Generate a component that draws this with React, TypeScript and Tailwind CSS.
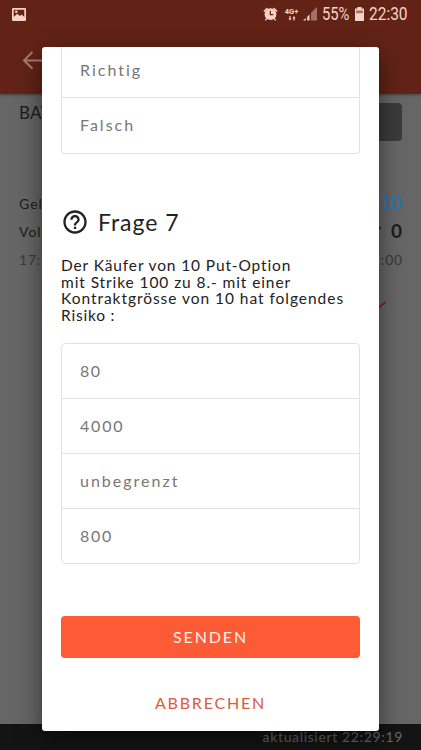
import { MdHelpOutline } from "react-icons/md";

const previousAnswers = ["Richtig", "Falsch"];

const answers = [
  { label: "80", spacing: "tracking-[1.5px]" },
  { label: "4000", spacing: "tracking-[1.8px]" },
  { label: "unbegrenzt", spacing: "tracking-[2px]" },
  { label: "800", spacing: "tracking-[1.7px]" },
];

const questionLines = [
  { text: "Der Käufer von 10 Put-Option", spacing: "tracking-[0.87px]" },
  { text: "mit Strike 100 zu 8.- mit einer", spacing: "tracking-[0.91px]" },
  { text: "Kontraktgrösse von 10 hat folgendes", spacing: "tracking-[0.96px]" },
  { text: "Risiko :", spacing: "tracking-[0.8px]" },
];

function StatusBar() {
  return (
    <div className="flex h-7 items-center pl-3 pr-[13px] font-['Roboto',sans-serif] text-[#f5d3c9]">
      <svg className="h-[13px] w-[14px]" viewBox="0 0 14 13" fill="none">
        <rect width="14" height="13" rx="1.3" fill="currentColor" />
        <path d="M1.7 1.7h10.6v7.2L9.6 6.4 8 8 5.2 5.7 1.7 9z" fill="#622316" />
        <circle cx="4.3" cy="3.7" r="1.3" fill="currentColor" />
      </svg>
      <div className="ml-auto flex items-center">
        <svg className="h-[14px] w-[15px]" viewBox="0 0 15 14" fill="currentColor">
          <circle cx="7.5" cy="7.2" r="5.9" />
          <path d="M.3 3.9 3.9.4l1.1 1.2-3.6 3.5zM14.7 3.9 11.1.4 10 1.6l3.6 3.5zM3.5 11l-1.7 2 .9.8 2-2zM11.5 11l1.7 2-.9.8-2-2z" />
          <path d="M7.3 3.8v3.8h3" fill="none" stroke="#622316" strokeWidth="1.2" />
        </svg>
        <div className="ml-[6px] flex w-[15px] flex-col items-center">
          <span className="text-[7.5px] font-bold leading-[8px]">4G+</span>
          <svg className="h-[5px] w-[8px]" viewBox="0 0 8 5" fill="currentColor">
            <path d="M1.4 0h1.2v2.4h1L2 4.6.4 2.4h1zM5.4 4.6h1.2V2.2h1L6 0 4.4 2.2h1z" />
          </svg>
        </div>
        <svg className="ml-[4px] h-[14px] w-[14px]" viewBox="0 0 14 14" fill="currentColor">
          <path d="M0 13.5 2.8 11v2.5zM4.2 9.8 6.5 7.4v6.1H4.2z" />
          <path d="M8 5.8 14 0v13.5H8z" opacity=".45" />
        </svg>
        <span className="ml-[5px] w-[28px] whitespace-nowrap text-[18px] leading-7">
          <span className="inline-block origin-left scale-x-[0.82]">55%</span>
        </span>
        <svg className="ml-[5px] h-[14px] w-[9px]" viewBox="0 0 9 14" fill="currentColor">
          <path d="M2.4 0h4.2v1.5H9V14H0V1.5h2.4z" />
          <path d="M1.1 3.4h6.8v2.8H1.1z" fill="#622316" opacity=".55" />
        </svg>
        <span className="ml-[5px] w-[39px] whitespace-nowrap text-[18px] leading-7">
          <span className="inline-block origin-left scale-x-[0.86]">22:30</span>
        </span>
      </div>
    </div>
  );
}

function QuoteScreen() {
  return (
    <div className="flex h-[750px] flex-col bg-[#666]">
      <header className="h-[94px] bg-[#622316] shadow-[0_1px_3px_rgba(0,0,0,0.35)]">
        <StatusBar />
        <svg className="ml-[22px] mt-[22px] h-5 w-[26px]" viewBox="0 0 26 20" fill="none">
          <path d="M26 10.4H2M10.5 2 2 10.4l8.5 8.4" stroke="#a87c72" strokeWidth="2" />
        </svg>
      </header>
      <main className="flex-1 px-[19px] text-[#1c1c1c]">
        <div className="mt-[9px] flex h-[38px] justify-between">
          <span className="text-[17px] leading-[20px] tracking-[0.3px]">BATN</span>
          <span className="w-20 rounded bg-[#3b3b3b]" />
        </div>
        <div className="mt-[48px] flex h-7 items-center justify-between">
          <span className="text-[14px] tracking-[1px]">Geld</span>
          <span className="text-[19px] font-bold text-[#2877ad]">10</span>
        </div>
        <div className="flex h-7 items-center justify-between">
          <span className="text-[14px] tracking-[1px]">Vol.</span>
          <span className="flex items-center gap-[9px]">
            <span className="text-[12px] font-bold">*</span>
            <span className="text-[19px] font-bold">0</span>
          </span>
        </div>
        <div className="flex h-7 items-center justify-between text-[14px] tracking-[0.8px] text-[#3a3a3a]">
          <span>17:3</span>
          <span className="-mr-px">:00</span>
        </div>
        <svg className="ml-auto mr-[16px] mt-[28px] h-[9px] w-[16px]" viewBox="0 0 16 9" fill="none">
          <path d="m0 5 7 3 8.500-7" stroke="#8c231b" strokeWidth="2" />
        </svg>
      </main>
      <footer className="h-[26px] bg-[#141414] pr-[18px] text-right text-[14px] leading-[25px] tracking-[0.65px] text-[#686868]">
        aktualisiert 22:29:19
      </footer>
    </div>
  );
}

export default function App() {
  return (
    <div className="relative h-[750px] w-[421px] overflow-hidden font-['Lato',sans-serif]">
      <QuoteScreen />
      <div className="absolute left-[42px] top-[47px] flex h-[684px] w-[337px] flex-col overflow-hidden rounded-[3px] bg-white px-[19px] shadow-[0_8px_24px_rgba(0,0,0,0.5)]">
        <ul className="h-[107px] rounded-b border border-t-0 border-[#e2e2e2] text-base text-[#777]">
          {previousAnswers.map((answer) => (
            <li
              key={answer}
              className="flex h-[51px] items-center border-b border-[#e2e2e2] pb-1 pl-[18px] tracking-[2px] last:h-[55px] last:border-b-0 last:pb-0.5"
            >
              {answer}
            </li>
          ))}
        </ul>

        <h2 className="mt-[53px] flex h-[30px] items-center text-[23px] tracking-[0.95px] text-[#222]">
          <MdHelpOutline className="mr-[9px] size-7" />
          Frage 7
        </h2>
        <div className="mt-[20px] text-[15.5px] leading-[16.5px] text-[#222]">
          {questionLines.map((line) => (
            <p key={line.text} className={"whitespace-nowrap " + line.spacing}>
              {line.text}
            </p>
          ))}
        </div>

        <ul className="mt-[20px] h-[221px] shrink-0 rounded border border-[#e2e2e2] text-base text-[#777]">
          {answers.map((answer) => (
            <li
              key={answer.label}
              className={"flex h-[55px] items-center border-b border-[#e2e2e2] pl-[18px] last:border-b-0 last:pb-0.5 " + answer.spacing}
            >
              {answer.label}
            </li>
          ))}
        </ul>

        <button className="mt-[52px] h-[42px] shrink-0 rounded bg-[#fc5b35] text-base tracking-[1.9px] text-[#fff0e8]">
          SENDEN
        </button>
        <button className="mt-[24px] h-[42px] shrink-0 text-base tracking-[1.8px] text-[#db5a43]">
          ABBRECHEN
        </button>
      </div>
    </div>
  );
}
